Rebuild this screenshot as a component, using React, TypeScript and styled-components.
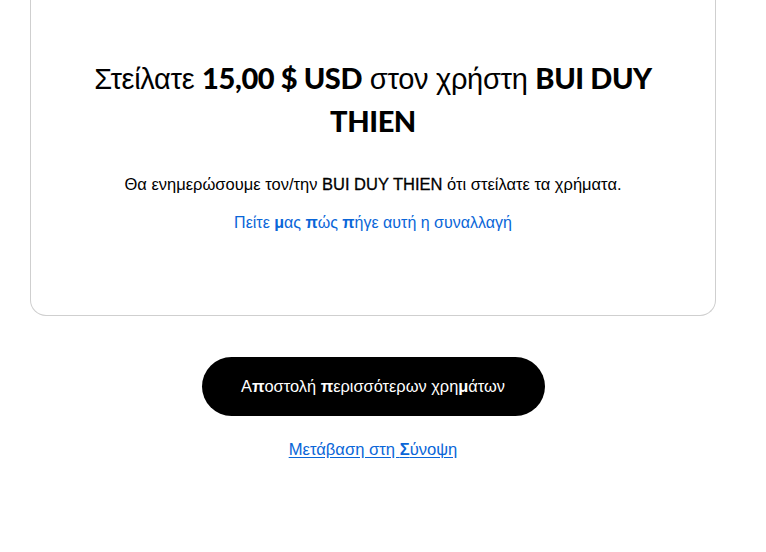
import React from 'react';
import styled, {createGlobalStyle} from 'styled-components';

const GlobalStyle = createGlobalStyle`
  html, body {
    margin: 0;
    padding: 0;
    background: #ffffff;
    font-family: "Liberation Sans", Arial, sans-serif;
    color: #000000;
  }
`;

const Page = styled.div`
  display: flex;
  flex-direction: column;
  align-items: center;
  padding: 0 50px 40px 30px;
`;

const Card = styled.section`
  box-sizing: border-box;
  width: 100%;
  display: flex;
  flex-direction: column;
  align-items: center;
  padding: 57px 40px 80px;
  border: 1px solid #cfcfcf;
  border-top: none;
  border-radius: 0 0 16px 16px;
  background: #ffffff;
`;

const Title = styled.h1`
  max-width: 590px;
  margin: 0;
  font-family: "Liberation Sans", Arial, sans-serif;
  font-weight: 400;
  font-size: 29px;
  line-height: 41px;
  text-align: center;
  letter-spacing: -0.3px;
`;

const Strong = styled.strong`
  font-family: Lato, "Liberation Sans", sans-serif;
  font-weight: 900;
  letter-spacing: -0.4px;
`;

const Note = styled.p`
  margin: 29px 0 0;
  font-size: 16.5px;
  line-height: 24px;
  text-align: center;
`;

const Name = styled.span`
  font-weight: 400;
  -webkit-text-stroke: 0.3px #000;
`;

const FeedbackLink = styled.a`
  margin-top: 15px;
  font-size: 16px;
  line-height: 24px;
  color: #0a66d8;
  text-decoration: none;
  cursor: pointer;
`;

const Glyph = styled.span`
  font-weight: 700;
`;

const SendButton = styled.button`
  margin-top: 41px;
  width: 343px;
  height: 59px;
  border: none;
  border-radius: 30px;
  background: #000000;
  color: #ffffff;
  font-family: "Liberation Sans", Arial, sans-serif;
  font-size: 16.4px;
  cursor: pointer;
`;

const SummaryLink = styled.a`
  margin-top: 24px;
  font-size: 16.6px;
  line-height: 20px;
  color: #0a66d8;
  text-decoration: underline;
  text-underline-offset: 2px;
  cursor: pointer;
`;

export default function App() {
    return (
        <>
            <GlobalStyle/>
            <Page>
                <Card>
                    <Title>
                        Στείλατε <Strong>15,00 $ USD</Strong> στον χρήστη <Strong>BUI DUY</Strong> <Strong>THIEN</Strong>
                    </Title>
                    <Note>
                        Θα ενημερώσουμε τον/την <Name>BUI DUY THIEN</Name> ότι στείλατε τα χρήματα.
                    </Note>
                    <FeedbackLink>
                        Πείτε <Glyph>μ</Glyph>ας <Glyph>π</Glyph>ώς <Glyph>π</Glyph>ήγε αυτή η συναλλαγή
                    </FeedbackLink>
                </Card>
                <SendButton>
                    Α<Glyph>π</Glyph>οστολή <Glyph>π</Glyph>ερισσότερων χρη<Glyph>μ</Glyph>άτων
                </SendButton>
                <SummaryLink>
                    Μετάβαση στη <Glyph>Σ</Glyph>ύνοψη
                </SummaryLink>
            </Page>
        </>
    );
}
